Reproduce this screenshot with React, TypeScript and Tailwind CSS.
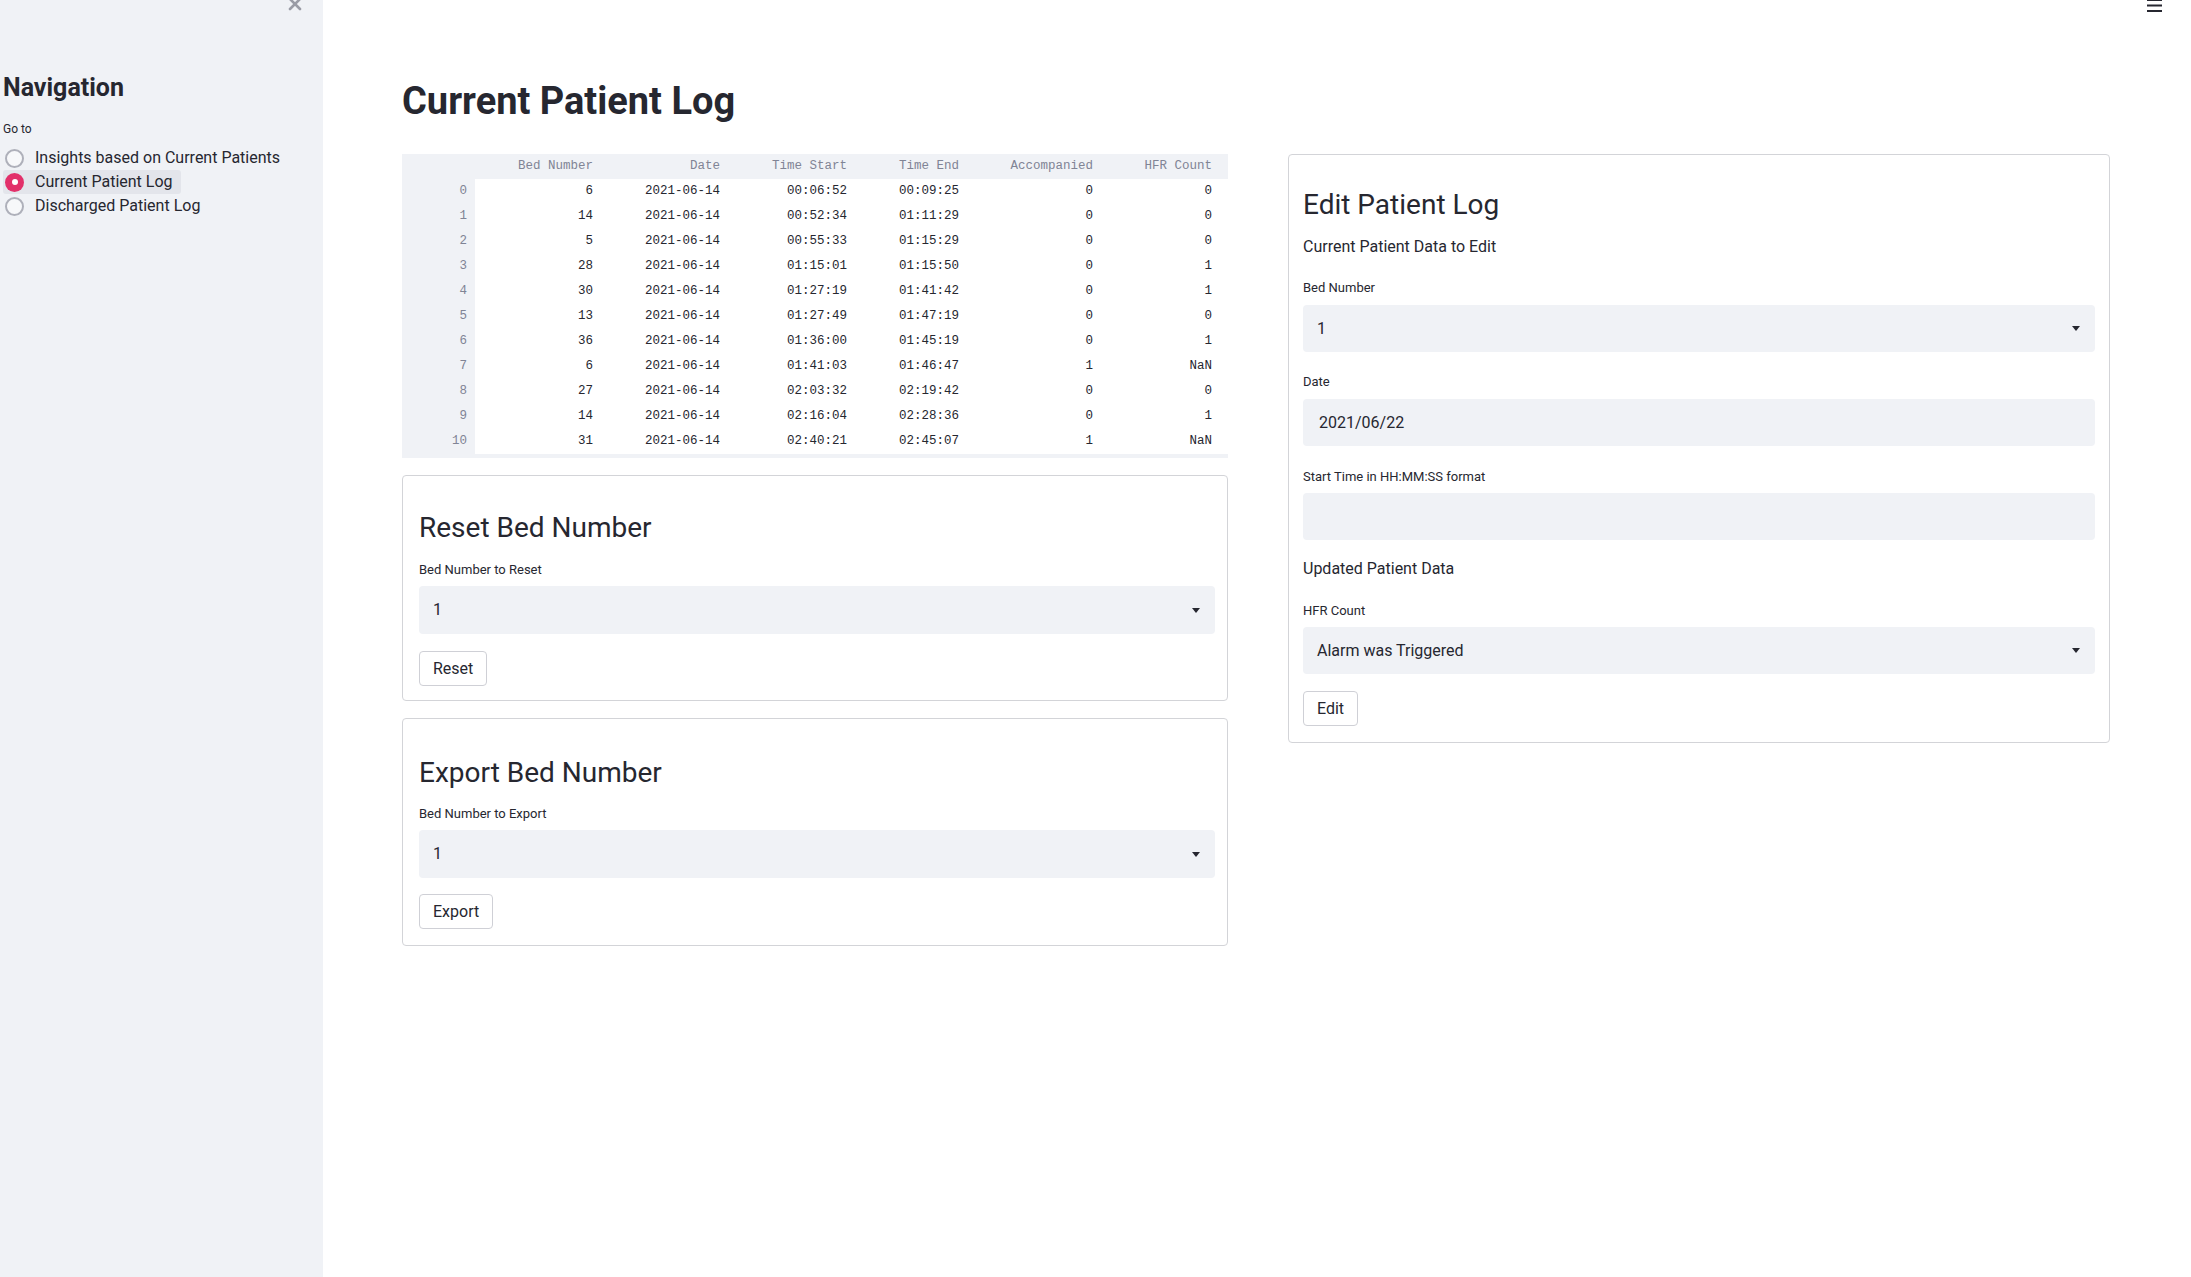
import { useState } from "react";

const rows = [
  [6, "2021-06-14", "00:06:52", "00:09:25", 0, "0"],
  [14, "2021-06-14", "00:52:34", "01:11:29", 0, "0"],
  [5, "2021-06-14", "00:55:33", "01:15:29", 0, "0"],
  [28, "2021-06-14", "01:15:01", "01:15:50", 0, "1"],
  [30, "2021-06-14", "01:27:19", "01:41:42", 0, "1"],
  [13, "2021-06-14", "01:27:49", "01:47:19", 0, "0"],
  [36, "2021-06-14", "01:36:00", "01:45:19", 0, "1"],
  [6, "2021-06-14", "01:41:03", "01:46:47", 1, "NaN"],
  [27, "2021-06-14", "02:03:32", "02:19:42", 0, "0"],
  [14, "2021-06-14", "02:16:04", "02:28:36", 0, "1"],
  [31, "2021-06-14", "02:40:21", "02:45:07", 1, "NaN"],
];

const headers = ["Bed Number", "Date", "Time Start", "Time End", "Accompanied", "HFR Count"];
const pages = ["Insights based on Current Patients", "Current Patient Log", "Discharged Patient Log"];

function Caret() {
  return (
    <svg width="8" height="5" viewBox="0 0 8 5" className="fill-[#262730]">
      <path d="M0 0h8L4 5z" />
    </svg>
  );
}

function SelectBox({ value, h = "h-[48px]" }: { value: string; h?: string }) {
  return (
    <div className={`${h} w-full rounded-[4px] bg-[#f0f2f6] flex items-center justify-between pl-[14px] pr-[15px] text-[16px] text-[#262730]`}>
      <span>{value}</span>
      <Caret />
    </div>
  );
}

function Label({ children, className = "" }: { children: string; className?: string }) {
  return <div className={`text-[13px] leading-[16px] text-[#262730] ${className}`}>{children}</div>;
}

function Button({ children, className = "" }: { children: string; className?: string }) {
  return (
    <button className={`h-[35px] px-[13px] rounded-[4px] border border-[#cfd0d6] bg-white text-[16px] text-[#262730] ${className}`}>
      {children}
    </button>
  );
}

function BedCard({ title, label, action, tall }: { title: string; label: string; action: string; tall?: boolean }) {
  return (
    <div className={`border border-[#d3d4d8] rounded-[4px] pl-[16px] pr-[12px] ${tall ? "pt-[37px] pb-[16px]" : "pt-[35px] pb-[14px]"}`}>
      <h3 className="text-[28px] leading-[34px] text-[#262730]">{title}</h3>
      <Label className={tall ? "mt-[16px]" : "mt-[17px]"}>{label}</Label>
      <div className="mt-[8px]">
        <SelectBox value="1" />
      </div>
      <Button className={tall ? "mt-[16px]" : "mt-[17px]"}>{action}</Button>
    </div>
  );
}

export default function App() {
  const [page, setPage] = useState(1);

  return (
    <div className="flex h-[1277px] bg-white text-[#262730] overflow-hidden" style={{ fontFamily: "Roboto, 'Noto Sans', sans-serif" }}>
      {/* sidebar */}
      <aside className="relative w-[323px] shrink-0 bg-[#f0f2f6] px-[3px]">
        <svg className="absolute left-[288px] top-[-3px]" width="14" height="14" viewBox="0 0 14 14" stroke="#9a9ca6" strokeWidth="2.6" strokeLinecap="round">
          <path d="M2 2l10 10M12 2L2 12" />
        </svg>
        <h2 className="pt-[73px] text-[25px] leading-[30px] font-bold">Navigation</h2>
        <div className="mt-[18px] text-[12px] leading-[16px]">Go to</div>
        <div className="mt-[9px] flex flex-col">
          {pages.map((p, i) => (
            <div key={p} onClick={() => setPage(i)} className={`flex items-center h-[24px] cursor-pointer rounded-[3px] w-fit pr-[8px] ${page === i ? "bg-[#e3e5eb]" : ""}`}>
              {page === i ? (
                <span className="ml-[2px] w-[19px] h-[19px] rounded-full bg-[#e2306a] flex items-center justify-center">
                  <span className="w-[6px] h-[6px] rounded-full bg-white" />
                </span>
              ) : (
                <span className="ml-[2px] w-[19px] h-[19px] rounded-full border-2 border-[#aeb0ba] bg-[#f7f8fa]" />
              )}
              <span className="ml-[11px] text-[16px] leading-[24px]">{p}</span>
            </div>
          ))}
        </div>
      </aside>

      {/* main */}
      <main className="relative flex-1 pl-[79px] pr-[81px] pt-[81px]">
        <svg className="absolute right-[29px] top-[-1px]" width="15" height="14" viewBox="0 0 15 14" fill="#262730">
          <rect x="0" y="0" width="15" height="2" />
          <rect x="0" y="5.5" width="15" height="2" />
          <rect x="0" y="11" width="15" height="2" />
        </svg>
        <h1 className="text-[38px] leading-[41px] font-bold">Current Patient Log</h1>

        <div className="mt-[32px] grid grid-cols-[826px_822px] gap-[60px] items-start">
          {/* left column */}
          <div className="flex flex-col gap-[17px]">
            <div className="bg-[#f0f2f6] pb-[4px] text-[12.5px]" style={{ fontFamily: "'Liberation Mono', 'DejaVu Sans Mono', monospace" }}>
              <div className="grid grid-cols-[73px_128px_127px_127px_112px_134px_1fr] h-[25px] items-center text-[#808495]">
                <div />
                {headers.map((h, j) => (
                  <div key={h} className={`text-right ${j === 5 ? "pr-[16px]" : "pr-[10px]"}`}>{h}</div>
                ))}
              </div>
              {rows.map((r, i) => (
                <div key={i} className="grid grid-cols-[73px_128px_127px_127px_112px_134px_1fr] h-[25px] items-center">
                  <div className="text-right pr-[8px] text-[#808495] h-full flex items-center justify-end">{i}</div>
                  {r.map((c, j) => (
                    <div key={j} className={`bg-white h-full flex items-center justify-end ${j === 5 ? "pr-[16px]" : "pr-[10px]"}`}>
                      {c}
                    </div>
                  ))}
                </div>
              ))}
            </div>

            <BedCard title="Reset Bed Number" label="Bed Number to Reset" action="Reset" />
            <BedCard title="Export Bed Number" label="Bed Number to Export" action="Export" tall />
          </div>

          {/* right column */}
          <div className="border border-[#d3d4d8] rounded-[4px] pt-[33px] px-[14px] pb-[16px]">
            <h3 className="text-[28px] leading-[34px]">Edit Patient Log</h3>
            <p className="mt-[13px] text-[16px] leading-[24px]">Current Patient Data to Edit</p>
            <Label className="mt-[21px]">Bed Number</Label>
            <div className="mt-[9px]">
              <SelectBox value="1" h="h-[47px]" />
            </div>
            <Label className="mt-[22px]">Date</Label>
            <div className="mt-[9px] h-[47px] rounded-[4px] bg-[#f0f2f6] flex items-center pl-[16px] text-[16px]">2021/06/22</div>
            <Label className="mt-[23px]">Start Time in HH:MM:SS format</Label>
            <div className="mt-[8px] h-[47px] rounded-[4px] bg-[#f0f2f6]" />
            <p className="mt-[17px] text-[16px] leading-[24px]">Updated Patient Data</p>
            <Label className="mt-[22px]">HFR Count</Label>
            <div className="mt-[8px]">
              <SelectBox value="Alarm was Triggered" h="h-[47px]" />
            </div>
            <Button className="mt-[17px]">Edit</Button>
          </div>
        </div>
      </main>
    </div>
  );
}
